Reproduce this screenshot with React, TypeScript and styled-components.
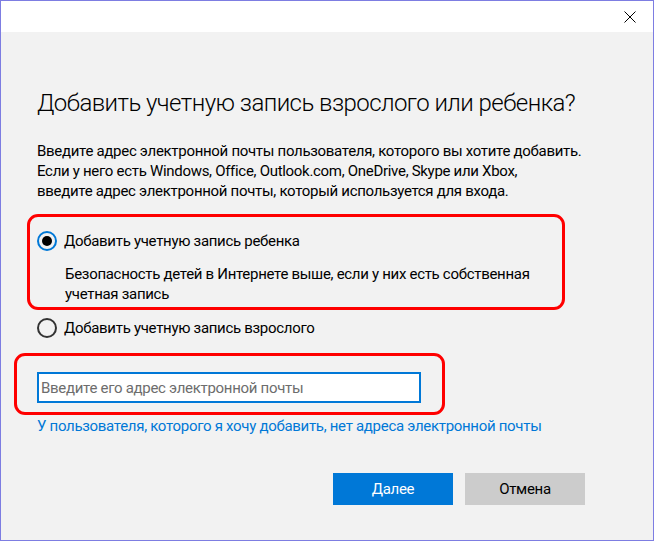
import React from 'react';
import styled, { createGlobalStyle } from 'styled-components';

const GlobalStyle = createGlobalStyle`
    html, body {
        margin: 0;
        padding: 0;
        background: #f2f2f2;
    }
    * {
        box-sizing: border-box;
    }
`;

const Window = styled.div`
    width: 654px;
    height: 541px;
    border: 1px solid #7d7de2;
    background-color: #f2f2f2;
    display: flex;
    flex-direction: column;
    font-family: Roboto, 'Liberation Sans', sans-serif;
    letter-spacing: -0.3px;
    color: #000;
`;

const TitleBar = styled.div`
    height: 31px;
    background-color: #fff;
    display: flex;
    justify-content: flex-end;
    align-items: center;
    padding-right: 16px;
`;

const CloseButton = styled.button`
    width: 14px;
    height: 14px;
    padding: 0;
    border: none;
    background: none;
    display: flex;
    align-items: center;
    justify-content: center;
`;

const Body = styled.div`
    padding: 0 36px;
    display: flex;
    flex-direction: column;
    align-items: flex-start;
`;

const Title = styled.h1`
    margin: 54px 0 0;
    font-size: 24px;
    line-height: 34px;
    font-weight: 300;
    letter-spacing: -0.55px;
    white-space: nowrap;
`;

const Intro = styled.p`
    margin: 21px 0 0;
    font-size: 15px;
    line-height: 20px;
`;

const Highlight = styled.div<{ $left: number; $width: number; $pad: string; $top: number }>`
    margin-top: ${p => p.$top}px;
    margin-left: ${p => -p.$left}px;
    width: ${p => p.$width}px;
    border: 3px solid #ff0000;
    border-radius: 11px;
    padding: ${p => p.$pad};
    display: flex;
    flex-direction: column;
    align-items: flex-start;
`;

const RadioRow = styled.label<{ $top?: number }>`
    display: flex;
    align-items: center;
    gap: 7px;
    height: 20px;
    margin-top: ${p => p.$top ?? 0}px;
    font-size: 15px;
`;

const RadioCircle = styled.span<{ $checked?: boolean }>`
    width: 20px;
    height: 20px;
    border-radius: 50%;
    border: 2px solid ${p => (p.$checked ? '#0078d7' : '#333')};
    display: flex;
    align-items: center;
    justify-content: center;
    &::after {
        content: '';
        width: 10px;
        height: 10px;
        border-radius: 50%;
        background: ${p => (p.$checked ? '#000' : 'transparent')};
    }
`;

const Hint = styled.p`
    margin: 13px 0 0 28px;
    font-size: 15px;
    line-height: 20px;
`;

const EmailInput = styled.input`
    width: 384px;
    height: 31px;
    border: 2px solid #0078d7;
    background: #fff;
    padding: 0 2px;
    font-family: inherit;
    font-size: 15px;
    letter-spacing: -0.3px;
    outline: none;
    caret-color: #000;
    &::placeholder {
        color: #6d6d6d;
    }
`;

const Link = styled.a`
    margin-top: 1px;
    font-size: 15px;
    line-height: 20px;
    color: #0078d7;
    text-decoration: none;
`;

const Actions = styled.div`
    align-self: stretch;
    display: flex;
    justify-content: flex-end;
    gap: 12px;
    margin: 37px 32px 0 0;
`;

const Button = styled.button<{ $primary?: boolean }>`
    width: 120px;
    height: 32px;
    border: none;
    font-family: inherit;
    font-size: 15px;
    letter-spacing: -0.3px;
    background: ${p => (p.$primary ? '#0078d7' : '#cccccc')};
    color: ${p => (p.$primary ? '#fff' : '#000')};
`;

export default function App() {
    return (
        <>
            <GlobalStyle />
            <Window>
                <TitleBar>
                    <CloseButton aria-label="Закрыть">
                        <svg width="12" height="12" viewBox="0 0 12 12">
                            <path d="M0.5 0.5 L11.5 11.5 M11.5 0.5 L0.5 11.5" stroke="#000" strokeWidth="1" />
                        </svg>
                    </CloseButton>
                </TitleBar>
                <Body>
                    <Title>Добавить учетную запись взрослого или ребенка?</Title>
                    <Intro>
                        Введите адрес электронной почты пользователя, которого вы хотите добавить.
                        <br />
                        Если у него есть Windows, Office, Outlook.com, OneDrive, Skype или Xbox,
                        <br />
                        введите адрес электронной почты, который используется для входа.
                    </Intro>
                    <Highlight $top={13} $left={10} $width={538} $pad="14px 0 3px 7px">
                        <RadioRow>
                            <RadioCircle $checked />
                            Добавить учетную запись ребенка
                        </RadioRow>
                        <Hint>
                            Безопасность детей в Интернете выше, если у них есть собственная
                            <br />
                            учетная запись
                        </Hint>
                    </Highlight>
                    <RadioRow $top={8}>
                        <RadioCircle />
                        Добавить учетную запись взрослого
                    </RadioRow>
                    <Highlight $top={15} $left={23} $width={431} $pad="16px 0 9px 20px">
                        <EmailInput placeholder="Введите его адрес электронной почты" autoFocus />
                    </Highlight>
                    <Link href="#">У пользователя, которого я хочу добавить, нет адреса электронной почты</Link>
                    <Actions>
                        <Button $primary>Далее</Button>
                        <Button>Отмена</Button>
                    </Actions>
                </Body>
            </Window>
        </>
    );
}
